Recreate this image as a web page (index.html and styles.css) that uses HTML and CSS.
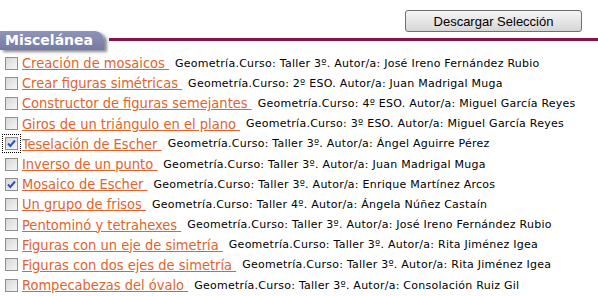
FILE: index.html
```html
<html>

<head>
    <meta charset="utf-8">
    <title>Miscelánea</title>
    <link rel="stylesheet" href="styles.css">
</head>

<body>
    <div class="toolbar">
        <button class="download">Descargar Selección</button>
    </div>
    <div class="section-head">
        <span class="tab">Miscelánea</span>
        <span class="rule"></span>
    </div>
    <ul class="items">
        <li><span class="box"></span><a href="#">Creación de mosaicos </a><span class="info">Geometría.Curso: Taller 3º. Autor/a: José Ireno Fernández Rubio</span></li>
        <li><span class="box"></span><a href="#">Crear figuras simétricas </a><span class="info">Geometría.Curso: 2º ESO. Autor/a: Juan Madrigal Muga</span></li>
        <li><span class="box"></span><a href="#">Constructor de figuras semejantes </a><span class="info">Geometría.Curso: 4º ESO. Autor/a: Miguel García Reyes</span></li>
        <li><span class="box"></span><a href="#">Giros de un triángulo en el plano </a><span class="info">Geometría.Curso: 3º ESO. Autor/a: Miguel García Reyes</span></li>
        <li><span class="box checked focus"><svg viewBox="0 0 11 11"><path d="M2 5.5 L4.3 8 L9 2.5" /></svg></span><a href="#">Teselación de Escher </a><span class="info">Geometría.Curso: Taller 3º. Autor/a: Ángel Aguirre Pérez</span></li>
        <li><span class="box"></span><a href="#">Inverso de un punto </a><span class="info">Geometría.Curso: Taller 3º. Autor/a: Juan Madrigal Muga</span></li>
        <li><span class="box checked"><svg viewBox="0 0 11 11"><path d="M2 5.5 L4.3 8 L9 2.5" /></svg></span><a href="#">Mosaico de Escher </a><span class="info">Geometría.Curso: Taller 3º. Autor/a: Enrique Martínez Arcos</span></li>
        <li><span class="box"></span><a href="#">Un grupo de frisos </a><span class="info">Geometría.Curso: Taller 4º. Autor/a: Ángela Núñez Castaín</span></li>
        <li><span class="box"></span><a href="#">Pentominó y tetrahexes </a><span class="info">Geometría.Curso: Taller 3º. Autor/a: José Ireno Fernández Rubio</span></li>
        <li><span class="box"></span><a href="#">Figuras con un eje de simetría </a><span class="info">Geometría.Curso: Taller 3º. Autor/a: Rita Jiménez Igea</span></li>
        <li><span class="box"></span><a href="#">Figuras con dos ejes de simetría </a><span class="info">Geometría.Curso: Taller 3º. Autor/a: Rita Jiménez Igea</span></li>
        <li><span class="box"></span><a href="#">Rompecabezas del óvalo </a><span class="info">Geometría.Curso: Taller 3º. Autor/a: Consolación Ruiz Gil</span></li>
    </ul>
</body>

</html>
```

FILE: styles.css
```css
body {
    margin: 0;
    background-color: #fff;
    font-family: "DejaVu Sans", Verdana, sans-serif;
}

.toolbar {
    display: flex;
    justify-content: flex-end;
    padding: 10px 16px 0 0;
    height: 21px;
}

.download {
    width: 177px;
    height: 22px;
    padding: 0;
    border: 1px solid #707070;
    border-radius: 3px;
    background: linear-gradient(#f4f4f4, #e6e6e6 50%, #d6d6d6);
    font-family: "Liberation Sans", Arial, sans-serif;
    font-size: 13px;
    color: #000;
}

.section-head {
    display: flex;
    align-items: center;
    height: 19px;
}

.tab {
    height: 19px;
    width: 99px;
    padding-left: 5px;
    line-height: 19px;
    background: linear-gradient(#9094bb, #7479a3);
    border-radius: 0 9px 0 0;
    box-shadow: 3px 2px 3px #8a8a95;
    color: #fff;
    font-size: 14px;
    font-weight: bold;
}

.rule {
    flex: 1;
    height: 3px;
    margin: 0 0 2px 5px;
    background-color: #8c1148;
}

.items {
    list-style: none;
    margin: 0;
    padding: 3px 0 0 5px;
}

.items li {
    display: flex;
    align-items: center;
    height: 20.2px;
    white-space: nowrap;
}

.box {
    display: flex;
    align-items: center;
    justify-content: center;
    box-sizing: border-box;
    width: 13px;
    height: 13px;
    margin-right: 4px;
    border: 1px solid #8f8f8f;
    background: linear-gradient(135deg, #d6d6d6, #f6f6f6);
}

.box svg {
    width: 11px;
    height: 11px;
}

.box path {
    fill: none;
    stroke: #2d55b8;
    stroke-width: 2;
}

.focus {
    outline: 1px dotted #000;
    outline-offset: 2px;
}

.items a {
    color: #e0642c;
    font-family: "DejaVu Sans Condensed", "DejaVu Sans", sans-serif;
    font-size: 14.5px;
    text-decoration: underline;
    white-space: pre;
    margin-right: 6px;
}

.info {
    font-size: 11px;
    letter-spacing: 0.25px;
    color: #000;
}
```
